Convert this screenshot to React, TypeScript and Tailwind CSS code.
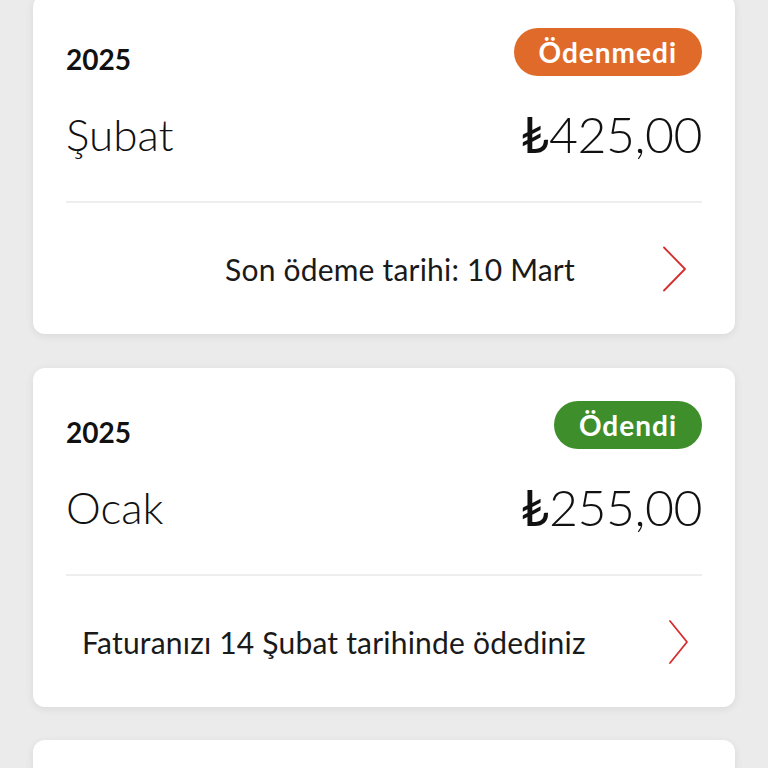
import React from 'react';

type Bill = {
  year: string;
  month: string;
  amount: string;
  paid: boolean;
  note: string;
  centered?: boolean;
};

const BILLS: Bill[] = [
  { year: '2025', month: 'Şubat', amount: '425,00', paid: false, note: 'Son ödeme tarihi: 10 Mart', centered: true },
  { year: '2025', month: 'Ocak', amount: '255,00', paid: true, note: 'Faturanızı 14 Şubat tarihinde ödediniz' },
];

const Chevron: React.FC<{ narrow?: boolean }> = ({ narrow }) => (
  <svg width="29" height="46" viewBox="0 0 29 46" fill="none" className="shrink-0">
    <path
      d={narrow ? 'M10 2 L27 23 L10 44' : 'M4 1.5 L25 23 L4 44.5'}
      stroke="#d62d2d"
      strokeWidth={1.8}
      strokeLinecap="round"
      strokeLinejoin="round"
    />
  </svg>
);

const BillCard: React.FC<{ bill: Bill; first?: boolean }> = ({ bill, first }) => {
  return (
    <div
      className={`bg-white rounded-[12px] shadow-[0_2px_8px_rgba(0,0,0,0.08)] px-[33px] pt-[33px] h-[339px] shrink-0 ${
        first ? 'mt-[-5px]' : 'mt-[34px]'
      }`}
    >
      {/* header */}
      <div className="flex items-center justify-between h-[48px]">
        <span className="text-[28px] font-bold text-[#111] pt-[13px] leading-none">{bill.year}</span>
        <span
          className={`h-[48px] rounded-full px-[25px] flex items-center text-[28px] font-bold text-white leading-none tracking-[1px] ${
            bill.paid ? 'bg-[#3e8e2b]' : 'bg-[#e06a2a]'
          }`}
        >
          {bill.paid ? 'Ödendi' : 'Ödenmedi'}
        </span>
      </div>

      {/* month + amount */}
      <div className="flex items-center justify-between h-[60px] mt-[28px] text-[#111]">
        <span className="text-[44px] font-light leading-none">{bill.month}</span>
        <span className="text-[50px] font-light leading-none tracking-[-0.5px]">
          <span className="font-normal">₺</span>
          {bill.amount}
        </span>
      </div>

      <div className="h-[2px] bg-[#eeeeee] mt-[37px]" />

      {/* footer */}
      <div className="flex items-center h-[132px]">
        <span
          className={`flex-1 text-[30px] text-[#1a1a1a] leading-none tracking-[0.2px] ${
            bill.centered ? 'text-center pl-[74px]' : 'pl-[16px]'
          }`}
        >
          {bill.note}
        </span>
        <div className="mr-[13px]">
          <Chevron narrow={bill.paid} />
        </div>
      </div>
    </div>
  );
};

export default function App() {
  return (
    <div
      className="w-[768px] h-[768px] overflow-hidden bg-[#ebebeb] px-[33px] flex flex-col"
      style={{ fontFamily: 'Lato, "Noto Sans", sans-serif' }}
    >
      {BILLS.map((b, i) => (
        <BillCard key={i} bill={b} first={i === 0} />
      ))}
      {/* next card, scrolled below the fold */}
      <div className="bg-white rounded-[12px] shadow-[0_2px_8px_rgba(0,0,0,0.08)] h-[339px] shrink-0 mt-[33px]" />
    </div>
  );
}
